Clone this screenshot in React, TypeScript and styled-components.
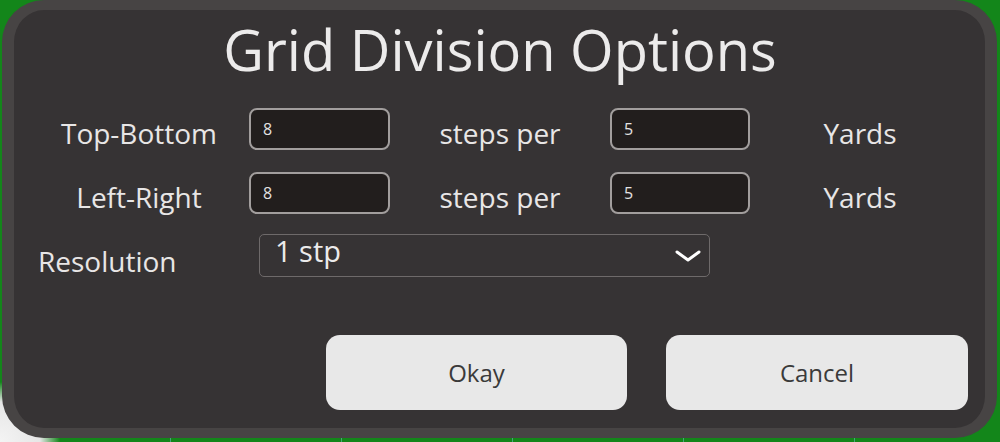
import React from 'react';
import styled, { createGlobalStyle } from 'styled-components';

const GlobalStyle = createGlobalStyle`
  html, body {
    margin: 0;
    padding: 0;
    width: 1000px;
    height: 442px;
    overflow: hidden;
  }
  body {
    font-family: 'Open Sans', 'Noto Sans', sans-serif;
    background:
      radial-gradient(circle at 0 442px, #f4f4f4 0, #e6e6e6 40px, rgba(230, 230, 230, 0) 60px),
      repeating-linear-gradient(90deg, transparent 0 170px, rgba(120, 200, 220, 0.5) 170px 171px),
      #13861a;
  }
`;

function App() {
  return (
    <>
      <GlobalStyle />
      <Dialog>
        <Title>Grid Division Options</Title>
        <StepGrid>
          <Label $first>Top-Bottom</Label>
          <NumberBox defaultValue="8" />
          <Label>steps per</Label>
          <NumberBox defaultValue="5" />
          <Label>Yards</Label>

          <Label $first>Left-Right</Label>
          <NumberBox defaultValue="8" />
          <Label>steps per</Label>
          <NumberBox defaultValue="5" />
          <Label>Yards</Label>
        </StepGrid>
        <ResolutionRow>
          <ResolutionLabel>Resolution</ResolutionLabel>
          <Select>
            <span>1 stp</span>
            <svg width="26" height="12" viewBox="0 0 26 12">
              <polyline
                points="2,2 13,10 24,2"
                fill="none"
                stroke="#fff"
                strokeWidth="3"
                strokeLinecap="round"
                strokeLinejoin="round"
              />
            </svg>
          </Select>
        </ResolutionRow>
        <Actions>
          <ActionButton $width={301}>Okay</ActionButton>
          <ActionButton $width={302}>Cancel</ActionButton>
        </Actions>
      </Dialog>
    </>
  );
}

export default App;

// Styled-components

const Dialog = styled.div`
  box-sizing: border-box;
  margin-left: 2px;
  width: 995px;
  height: 438px;
  border-style: solid;
  border-color: #474444;
  border-width: 10px 12px;
  border-radius: 42px;
  background: #363334;
  padding: 10px 17px 18px 24px;
  display: flex;
  flex-direction: column;
  color: #e8e6e6;
`;

const Title = styled.h1`
  margin: 0;
  font-size: 56px;
  line-height: 58px;
  font-weight: 400;
  text-align: center;
  padding-right: 6px;
  color: #ecebeb;
`;

const StepGrid = styled.div`
  margin-top: 30px;
  display: grid;
  grid-template-columns: 211px 141px 220px 140px 220px;
  grid-auto-rows: 42px;
  row-gap: 22px;
  align-items: center;
`;

const Label = styled.div<{ $first?: boolean }>`
  font-size: 28px;
  line-height: 1;
  padding-top: 8px;
  padding-right: ${(p) => (p.$first ? 9 : 0)}px;
  text-align: center;
  white-space: nowrap;
`;

const NumberBox = styled.input.attrs({ type: 'text' })`
  box-sizing: border-box;
  width: 100%;
  height: 42px;
  border: 2px solid #a29e9d;
  border-radius: 8px;
  background: #221e1d;
  color: #e4e2e2;
  font-family: 'Open Sans', 'Noto Sans', sans-serif;
  font-size: 16px;
  padding: 0 12px;
  outline: none;
`;

const ResolutionRow = styled.div`
  margin-top: 20px;
  display: flex;
  align-items: center;
`;

const ResolutionLabel = styled.div`
  width: 221px;
  font-size: 28px;
  line-height: 1;
  padding-top: 10px;
`;

const Select = styled.div`
  box-sizing: border-box;
  width: 451px;
  height: 43px;
  border: 1px solid #6e6a6a;
  border-radius: 5px;
  display: flex;
  align-items: flex-start;
  justify-content: space-between;
  padding: 0 8px 0 15px;
  font-size: 29px;
  line-height: 32px;
  color: #ecebeb;

  svg {
    margin-top: 15px;
  }
`;

const Actions = styled.div`
  margin-top: auto;
  display: flex;
  justify-content: flex-end;
  gap: 39px;
`;

const ActionButton = styled.button<{ $width: number }>`
  width: ${(p) => p.$width}px;
  height: 75px;
  border: none;
  border-radius: 14px;
  background: #e8e8e8;
  color: #3a3a3a;
  font-family: 'Open Sans', 'Noto Sans', sans-serif;
  font-size: 24px;
  cursor: pointer;
`;
